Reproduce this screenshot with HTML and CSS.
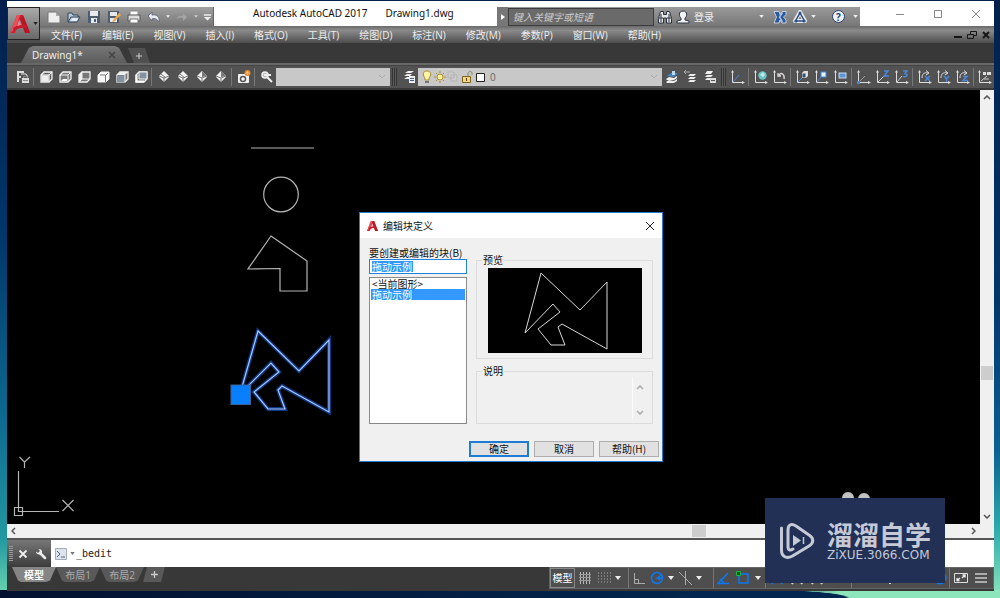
FILE: index.html
```html
<!DOCTYPE html>
<html lang="zh-CN">
<head>
<meta charset="utf-8">
<title>Autodesk AutoCAD 2017 - Drawing1.dwg</title>
<link rel="stylesheet" href="styles.css">
</head>
<body>
<svg class="defs" aria-hidden="true">
  <symbol id="caret" viewBox="0 0 6 4"><path d="M0 0h6L3 4z" fill="currentColor"/></symbol>
  <symbol id="logo-a" viewBox="0 0 22 22">
    <path d="M1 20 8 2h6l7 18h-5l-5-14-5 14z" fill="#d3202f"/>
    <path d="M8 2h3L7 15l-6 5z" fill="#e9515a"/>
    <path d="M11 6l5 14h5L14 2z" fill="#b81525"/>
    <path d="M4 15c4-3 8-4 13-3l1 3c-5-1-9 0-13 3z" fill="#c41c2b"/>
    <path d="M10 7l2 5-4 1z" fill="#ef8088"/>
  </symbol>
  <symbol id="cube" viewBox="0 0 16 16"><path d="M3 6 6 3h8v7l-3 3H3z" fill="#777" stroke="#f2f2f2" stroke-width="1.300"/></symbol>
  <symbol id="cube-top" viewBox="0 0 16 16"><use href="#cube"/><path d="M3.500 6.500h7v6h-7z" fill="#eee"/><path d="M3 6h8v7M11 6l3-3" fill="none" stroke="#fff"/><path d="M7 4.500h3M12.500 7v3" stroke="#555"/></symbol>
  <symbol id="cube-bottom" viewBox="0 0 16 16"><use href="#cube"/><path d="M3 6h8v7M11 6l3-3" fill="none" stroke="#eee"/><path d="M4 12l2-2h4v2z" fill="#fff"/></symbol>
  <symbol id="cube-left" viewBox="0 0 16 16"><use href="#cube"/><path d="M6 3v7l-3 3M6 10h8" stroke="#eee" fill="none"/><path d="M3 6l3-3v7l-3 3z" fill="#eee"/></symbol>
  <symbol id="cube-right" viewBox="0 0 16 16"><path d="M3 6 6 3h8v7l-3 3H3z" fill="#f7f7f7" stroke="#f2f2f2"/><path d="M5 6h5.500v7M11 6l2-2" fill="none" stroke="#777"/></symbol>
  <symbol id="cube-front" viewBox="0 0 16 16"><use href="#cube"/><path d="M3 6 6 3h8l-3 3z" fill="#eee"/><path d="M3 6.500h8v7H3z" fill="#8492a0"/><path d="M11 6v7" stroke="#eee"/></symbol>
  <symbol id="cube-back" viewBox="0 0 16 16"><use href="#cube"/><path d="M6 3h8v7H6z" fill="#8492a0" stroke="#eee"/><path d="M3.500 6v6.500H11" stroke="#fff" fill="none" stroke-width="2"/></symbol>
  <symbol id="iso" viewBox="0 0 16 16"><path d="M8 2l5 5v1l-5 5-5-5V7z" fill="#f2f2f2"/><path d="M3 7l5 2 5-2M8 9v4M5 5l5 4" stroke="#777" fill="none"/></symbol>
  <symbol id="iso-dark" viewBox="0 0 16 16"><path d="M8 2l5 5v1l-5 5-5-5V7z" fill="#f2f2f2"/><path d="M8 2l5 5-5 1z" fill="#777"/><path d="M3 7l5 2 5-2M8 9v4" stroke="#777" fill="none"/></symbol>
  <symbol id="views" viewBox="0 0 16 16"><path d="M3 8V3h6M3 13V8h3" stroke="#ddd" fill="none" stroke-width="2"/><path d="M6 5h5l2 3" stroke="#eee" fill="none"/><rect x="7" y="9" width="7" height="5" fill="#ddd"/><path d="M8.500 9V7.500h4V9M8 11.500h5" stroke="#888" fill="none"/></symbol>
  <symbol id="camera" viewBox="0 0 16 16"><rect x="2" y="5" width="11" height="9" rx="1" fill="#f0f0f0"/><circle cx="7" cy="10" r="2.500" fill="#fff" stroke="#555" stroke-width="1.500"/><circle cx="11.500" cy="4" r="3" fill="#e88a2e"/><path d="M11.500 2v4M9.500 4h4" stroke="#f8c080"/></symbol>
  <symbol id="key" viewBox="0 0 16 16"><circle cx="6" cy="6" r="3" fill="#bbb" stroke="#eee" stroke-width="1.500"/><path d="M5 6h7M8 8l5 5" stroke="#eee" stroke-width="2"/></symbol>
  <symbol id="layers" viewBox="0 0 16 16"><path d="M4 4 7 2h6l-3 2zM3 7l3-2h5L9 7zM3 10l3-2h3l-1 2z" fill="#eee"/><rect x="8" y="7" width="6" height="7" fill="#eee"/><path d="M9 9.500h4M9 11.500h4" stroke="#34628c"/></symbol>
  <symbol id="stack-blue" viewBox="0 0 16 16"><path d="M3 7l4-3h7l-4 4z" fill="#4385c2"/><path d="M2 10l3-2 5 1 3-2v2l-3 2H3zM2 13l3-2 5 1 3-2v2l-3 2H3z" fill="#eee"/><path d="M8 2h3v4H8z" fill="#b9dbf5"/></symbol>
  <symbol id="stack-prev" viewBox="0 0 16 16"><path d="M1 3h6M1 3l2-2M1 3l2 2" stroke="#aaa" fill="none"/><path d="M5 7l2-2h6l-2 2zM5 10l2-2h6l-2 2zM5 13l2-2h6l-2 2z" fill="#eee"/></symbol>
  <symbol id="stack-box" viewBox="0 0 16 16"><path d="M3 5l2-3h6L9 5zM3 8l2-2h6L9 8zM3 11l2-2h3v2z" fill="#eee"/><rect x="8" y="9" width="6" height="5" fill="#ddd"/><path d="M9 11.500h4" stroke="#555"/></symbol>
  <symbol id="ucs" viewBox="0 0 16 16"><path d="M2.500 2v11.500H14" stroke="#ddd" fill="none"/><path d="M1 3.500L2.500 1 4 3.500M12 12l3 1.500-3 1.500" fill="#ddd"/></symbol>
  <symbol id="ucs-plain" viewBox="0 0 16 16"><use href="#ucs"/><path d="M3 13l6-7" stroke="#4b87d8"/></symbol>
  <symbol id="ucs-world" viewBox="0 0 16 16"><use href="#ucs"/><circle cx="9.500" cy="6.500" r="4.200" fill="#6cc4c7"/><path d="M7 6l3-3 2 3-2 2z" fill="#b8ede0"/></symbol>
  <symbol id="ucs-prev" viewBox="0 0 16 16"><use href="#ucs"/><path d="M7 6c2-3 6-1 5 4M6 4v3h3" stroke="#ddd" fill="none" stroke-width="1.300"/></symbol>
  <symbol id="ucs-face" viewBox="0 0 16 16"><use href="#ucs"/><path d="M3 13l4-4" stroke="#4b87d8"/><path d="M7 4l2-2h4v5l-2 2H7z" fill="#ddd"/><path d="M7.500 4.500h3v4h-3z" fill="#34506f"/></symbol>
  <symbol id="ucs-object" viewBox="0 0 16 16"><use href="#ucs"/><path d="M3 13l4-5" stroke="#4b87d8"/><rect x="7" y="3" width="5" height="5" fill="#e5eefb" stroke="#4b87d8"/></symbol>
  <symbol id="ucs-view" viewBox="0 0 16 16"><use href="#ucs"/><rect x="6" y="4" width="7" height="5" fill="#5b95d8" stroke="#c7d8ea"/></symbol>
  <symbol id="ucs-origin" viewBox="0 0 16 16"><use href="#ucs"/><path d="M3 13l6-6" stroke="#999"/><rect x="1" y="12" width="3" height="3" fill="#4b87d8"/></symbol>
  <symbol id="ucs-z" viewBox="0 0 16 16"><use href="#ucs"/><path d="M3 13l6-6" stroke="#ccc"/><path d="M9 2h4L9 7h5" stroke="#4b87d8" fill="none" stroke-width="1.500"/></symbol>
  <symbol id="ucs-3" viewBox="0 0 16 16"><use href="#ucs"/><path d="M3 13l5-6" stroke="#ccc"/><path d="M9 2h4l-2 2.500c3 0 3 4-2 3" stroke="#4b87d8" fill="none" stroke-width="1.500"/></symbol>
  <symbol id="ucs-rot" viewBox="0 0 16 16"><use href="#ucs"/><path d="M5 9c0-4 2-6 6-5M9 1.500l3 2.500-3 2" stroke="#ddd" fill="none"/></symbol>
  <symbol id="ucs-rx" viewBox="0 0 16 16"><use href="#ucs-rot"/><path d="M8 7l5 5M13 7l-5 5" stroke="#4b87d8" stroke-width="1.500"/></symbol>
  <symbol id="ucs-ry" viewBox="0 0 16 16"><use href="#ucs-rot"/><path d="M8 7l2.500 3L13 7M10.500 10v3" stroke="#4b87d8" fill="none" stroke-width="1.500"/></symbol>
  <symbol id="ucs-rz" viewBox="0 0 16 16"><use href="#ucs-rot"/><path d="M8 7.500h4l-4 4h5" stroke="#4b87d8" fill="none" stroke-width="1.500"/></symbol>
  <symbol id="ucs-apply" viewBox="0 0 16 16"><use href="#ucs"/><path d="M4 12l6-5M7 10h5" stroke="#ccc"/><path d="M6 3h3v3H6zM10 3h4v3h-4z" fill="#ddd"/></symbol>
</svg>

<main class="window">
  <header class="header">
    <button class="app-button" aria-label="应用程序菜单"><svg class="app-logo"><use href="#logo-a"/></svg><svg class="caret dark"><use href="#caret"/></svg></button>
    <div class="titlebar">
      <div class="quick-access">
        <button aria-label="新建"><svg viewBox="0 0 14 14"><path d="M1 2h8l4 4v7H1z" fill="#eee" stroke="#777"/><path d="M9 2v4h4" fill="#aaa"/></svg></button>
        <button aria-label="打开"><svg viewBox="0 0 14 14"><path d="M1 12V3h4l1 2h5v2M1 12l3-5h9l-3 5z" fill="#b7c7d8" stroke="#34475b"/><path d="M5 8h6l-1 3H4z" fill="#e6edf4"/></svg></button>
        <button aria-label="保存"><svg viewBox="0 0 14 14"><path d="M1 1h12v12H1z" fill="#4d5d70"/><path d="M3 1h8v5H3zM4 8h6v5H4z" fill="#e6e9ee"/><path d="M7 9h2v3H7z" fill="#4d5d70"/></svg></button>
        <button aria-label="另存为"><svg viewBox="0 0 14 14"><path d="M1 1h11v12H1z" fill="#4d5d70"/><path d="M3 2h7v4H3zM3 8h7v4H3z" fill="#e6e9ee"/><path d="M6 10l6-7 2 2-6 6-3 1z" fill="#eaa74c"/></svg></button>
        <button aria-label="打印"><svg viewBox="0 0 14 14"><path d="M3 1h8v5H3z" fill="#fff" stroke="#888"/><path d="M1 5h12v6H1z" fill="#dcdcdc" stroke="#555"/><path d="M3 9h8v4H3z" fill="#fff" stroke="#777"/></svg></button>
        <button aria-label="放弃"><svg viewBox="0 0 14 14"><path d="M1 6l4-4v3c5-1 8 2 7 7-2-3-4-4-7-3v2z" fill="#e6ebef" stroke="#667"/></svg></button>
        <svg class="caret light"><use href="#caret"/></svg>
        <button aria-label="重做" disabled><svg viewBox="0 0 14 14"><path d="M2 9c0-3 3-4 6-3V4l4 3-4 4V8c-3-1-4 0-6 1z" fill="#a5a5a5"/></svg></button>
        <svg class="caret faint"><use href="#caret"/></svg>
        <button class="narrow" aria-label="自定义"><svg viewBox="0 0 10 14"><path d="M1 4h8v1.500H1zM1 7h8l-4 4z" fill="#eee"/></svg></button>
      </div>
      <h1 class="title"><span>Autodesk AutoCAD 2017</span><span>Drawing1.dwg</span></h1>
      <form class="info-center">
        <button type="button" class="expand" aria-label="展开"><svg viewBox="0 0 4 6"><path d="M0 0l4 3-4 3z" fill="#fff"/></svg></button>
        <input class="search" type="text" aria-label="搜索" placeholder="键入关键字或短语">
        <button type="button" class="info-icon" aria-label="查找"><svg viewBox="0 0 14 14"><path d="M2.500 1.500h3v3h3v-3h3l2 7v4.500h-5V8h-3v5H.500V8.500z" fill="#e8e8e8" stroke="#26303e"/><path d="M3 4v8M11 4v8M1 8h4M9 8h4" stroke="#26303e"/></svg></button>
        <button type="button" class="login"><svg viewBox="0 0 14 14"><path d="M7 1c5 0 4 6 2 7v2l4 1v2H1v-2l4-1V8C3 7 2 1 7 1z" fill="#f4f4f4" stroke="#2b3644"/></svg>登录</button>
        <svg class="caret light"><use href="#caret"/></svg>
        <button type="button" class="info-icon exchange" aria-label="Exchange"><svg viewBox="0 0 14 14"><path d="M1 1.500h5l1 3 2-3h4v3l-2.500 2.500L13 10v3H9L7 10l-1 3H1l2.500-6z" fill="#2b579b" stroke="#dde6f2" stroke-width=".8"/><path d="M9.500 2.500L6.500 7l3 5" stroke="#a7c4e8" fill="none" stroke-width="1.500"/></svg></button>
        <button type="button" class="info-icon" aria-label="A360"><svg viewBox="0 0 14 14"><path d="M7 2l5 9H2z" fill="none" stroke="#e6eaf0" stroke-width="4" stroke-linejoin="round"/><path d="M7 3l4.500 8h-9z" fill="none" stroke="#2d4e82" stroke-width="1.500"/><circle cx="7" cy="3" r="1.500" fill="#2d4e82"/><circle cx="3" cy="11" r="1.500" fill="#2d4e82"/><circle cx="11" cy="11" r="1.500" fill="#2d4e82"/></svg></button>
        <svg class="caret light"><use href="#caret"/></svg>
        <button type="button" class="help-button" aria-label="帮助">?</button>
        <svg class="caret light"><use href="#caret"/></svg>
      </form>
      <div class="window-controls">
        <button aria-label="最小化"><svg viewBox="0 0 10 10"><path d="M1 5.500h8" stroke="#888"/></svg></button>
        <button aria-label="最大化"><svg viewBox="0 0 10 10"><path d="M1.500 1.500h7v7h-7z" fill="none" stroke="#888"/></svg></button>
        <button aria-label="关闭"><svg viewBox="0 0 10 10"><path d="M1 1l8 8M9 1L1 9" stroke="#888"/></svg></button>
      </div>
    </div>
    <nav class="menubar">
      <button>文件(F)</button><button>编辑(E)</button><button>视图(V)</button><button>插入(I)</button><button>格式(O)</button><button>工具(T)</button><button>绘图(D)</button><button>标注(N)</button><button>修改(M)</button><button>参数(P)</button><button>窗口(W)</button><button>帮助(H)</button>
      <div class="doc-controls">
        <button aria-label="最小化图形"><svg viewBox="0 0 10 10"><path d="M1 7h8" stroke="#161616" stroke-width="2"/></svg></button>
        <button aria-label="还原图形"><svg viewBox="0 0 10 10"><path d="M3.500 4V1.500h6v4H7M.500 4.500h6v4h-6z" fill="none" stroke="#161616"/></svg></button>
        <button aria-label="关闭图形"><svg viewBox="0 0 10 10"><path d="M2 2l6 6M8 2L2 8" stroke="#161616" stroke-width="2"/></svg></button>
      </div>
    </nav>
  </header>

  <div class="file-tabs">
    <button class="file-tab">Drawing1*<svg viewBox="0 0 8 8"><path d="M1 1l6 6M7 1L1 7" stroke="#444" stroke-width="1.500"/></svg></button>
    <button class="add-tab" aria-label="新图形"><svg viewBox="0 0 8 8"><path d="M4 1v6M1 4h6" stroke="#ccc"/></svg></button>
  </div>

  <div class="toolbar">
    <button aria-label="命名视图"><svg><use href="#views"/></svg></button>
    <i class="sep"></i>
    <button aria-label="俯视"><svg><use href="#cube-top"/></svg></button>
    <button aria-label="仰视"><svg><use href="#cube-bottom"/></svg></button>
    <button aria-label="左视"><svg><use href="#cube-left"/></svg></button>
    <button aria-label="右视"><svg><use href="#cube-right"/></svg></button>
    <button aria-label="前视"><svg><use href="#cube-front"/></svg></button>
    <button aria-label="后视"><svg><use href="#cube-back"/></svg></button>
    <i class="sep"></i>
    <button aria-label="西南等轴测"><svg><use href="#iso"/></svg></button>
    <button aria-label="东南等轴测"><svg><use href="#iso"/></svg></button>
    <button aria-label="东北等轴测"><svg><use href="#iso-dark"/></svg></button>
    <button aria-label="西北等轴测"><svg><use href="#iso-dark"/></svg></button>
    <i class="sep"></i>
    <button aria-label="创建相机"><svg><use href="#camera"/></svg></button>
    <i class="sep"></i>
    <button aria-label="上一个视图"><svg><use href="#key"/></svg></button>
    <div class="combo view-combo"><select aria-label="视口" disabled><option></option></select><svg class="chevron" viewBox="0 0 8 5"><path d="M1 1l3 3 3-3" fill="none" stroke="#a9a9a9"/></svg></div>
    <i class="grip"></i>
    <button aria-label="图层特性"><svg><use href="#layers"/></svg></button>
    <div class="combo layer-combo">
      <svg class="layer-icons" viewBox="0 0 66 14">
        <path d="M5 1c-5 0-4 5-2 7v2h4V8c2-2 3-7-2-7z" fill="#fff6a6" stroke="#a98f31"/><path d="M3 11h4v2H3z" fill="#777"/>
        <circle cx="18" cy="7" r="3" fill="#fff09a" stroke="#a98f31"/><path d="M18 1v2M18 11v2M12 7h2M22 7h2M14 3l1 1M21 10l1 1M14 11l1-1M21 4l1-1" stroke="#b08f2d"/>
        <path d="M26 2h6v6h-6zM29 5h6v6h-6z" fill="#ccc" stroke="#b4b4b4"/>
        <path d="M40.500 6.500h8v6h-8z" fill="#f6d580" stroke="#7c6423"/><path d="M46 6V3c1-2 4-2 4 0v2" stroke="#8a8a6a" fill="none"/><path d="M44.500 8v3" stroke="#513f19"/>
        <path d="M54.500 3.500h8v8h-8z" fill="#fff" stroke="#222"/>
      </svg>
      <select aria-label="图层" disabled><option>0</option></select><svg class="chevron" viewBox="0 0 8 5"><path d="M1 1l3 3 3-3" fill="none" stroke="#a9a9a9"/></svg>
    </div>
    <button aria-label="置为当前"><svg><use href="#stack-blue"/></svg></button>
    <button aria-label="上一个图层"><svg><use href="#stack-prev"/></svg></button>
    <button aria-label="图层状态"><svg><use href="#stack-box"/></svg></button>
    <i class="grip"></i>
    <button aria-label="UCS"><svg><use href="#ucs-plain"/></svg></button>
    <i class="sep"></i>
    <button aria-label="世界"><svg><use href="#ucs-world"/></svg></button>
    <button aria-label="上一个 UCS"><svg><use href="#ucs-prev"/></svg></button>
    <i class="sep"></i>
    <button aria-label="面"><svg><use href="#ucs-face"/></svg></button>
    <button aria-label="对象"><svg><use href="#ucs-object"/></svg></button>
    <button aria-label="视图"><svg><use href="#ucs-view"/></svg></button>
    <i class="sep"></i>
    <button aria-label="原点"><svg><use href="#ucs-origin"/></svg></button>
    <button aria-label="Z 轴矢量"><svg><use href="#ucs-z"/></svg></button>
    <button aria-label="三点"><svg><use href="#ucs-3"/></svg></button>
    <i class="sep"></i>
    <button aria-label="X"><svg><use href="#ucs-rx"/></svg></button>
    <button aria-label="Y"><svg><use href="#ucs-ry"/></svg></button>
    <button aria-label="Z"><svg><use href="#ucs-rz"/></svg></button>
    <i class="sep"></i>
    <button aria-label="应用"><svg><use href="#ucs-apply"/></svg></button>
  </div>

  <section class="workspace">
    <svg class="drawing" viewBox="7 90 973 434" preserveAspectRatio="xMinYMin meet">
      <g fill="none" stroke="#b4b4b4" stroke-width="1.200">
        <path d="M251 148h63"/>
        <circle cx="281" cy="194.500" r="17.300"/>
        <path d="M271 236l36 25v30h-27v-22.500l-32 .5z"/>
        <path d="M18.500 471v40.500H59M14.500 507.500h8v8h-8z"/>
        <path d="M19.500 457l5 5v6M30 457l-5.500 5M62.500 500l11 11M73.500 500l-11 11"/>
      </g>
      <path class="glow" d="M240 394l18-63 41 40 30-31v72l-47-26-4 4 7 19h-17l-14-17 25-20-8-9z"/>
      <path class="selected" d="M240 394l18-63 41 40 30-31v72l-47-26-4 4 7 19h-17l-14-17 25-20-8-9z"/>
      <rect x="231" y="385" width="19.500" height="19.500" fill="#087fff" stroke="#3b6296"/>
      <circle cx="848" cy="498" r="6" fill="#c3c3c3"/><circle cx="864" cy="499" r="6" fill="#c3c3c3"/>
    </svg>
    <div class="v-scroll">
      <svg viewBox="0 0 8 5"><path d="M1 4l3-3 3 3" fill="none" stroke="#555" stroke-width="1.500"/></svg>
      <i></i>
      <svg viewBox="0 0 8 5"><path d="M1 1l3 3 3-3" fill="none" stroke="#555" stroke-width="1.500"/></svg>
    </div>
    <div class="h-scroll">
      <svg viewBox="0 0 5 8"><path d="M4 1L1 4l3 3" fill="none" stroke="#555" stroke-width="1.500"/></svg>
      <i></i>
      <svg viewBox="0 0 5 8"><path d="M1 1l3 3-3 3" fill="none" stroke="#555" stroke-width="1.500"/></svg>
    </div>

    <form class="dialog" role="dialog" aria-labelledby="dialog-title">
      <div class="dialog-title">
        <svg class="dialog-logo"><use href="#logo-a"/></svg>
        <h2 id="dialog-title">编辑块定义</h2>
        <button type="button" class="dialog-close" aria-label="关闭"><svg viewBox="0 0 10 10"><path d="M1 1l8 8M9 1L1 9" stroke="#222"/></svg></button>
      </div>
      <div class="dialog-body">
        <div class="block-column">
          <label for="block">要创建或编辑的块(B)</label>
          <div class="block-field"><input id="block" type="text" value="拖动示例"></div>
          <ul class="block-list" role="listbox" aria-label="块列表">
            <li role="option">&lt;当前图形&gt;</li>
            <li role="option" class="active" aria-selected="true"><span>拖动示例</span></li>
          </ul>
        </div>
        <div class="detail-column">
          <fieldset class="preview">
            <legend>预览</legend>
            <svg viewBox="0 0 154 85"><path d="M37 65L53 5l39 37 27-28v67l-45-25-4 3 7 18H63L50 61l22-17-7-8z" fill="none" stroke="#d8d8d8"/></svg>
          </fieldset>
          <fieldset class="description">
            <legend>说明</legend>
            <textarea aria-label="说明" readonly></textarea>
            <div class="mini-scroll">
              <svg viewBox="0 0 8 5"><path d="M1 4l3-3 3 3" fill="none" stroke="#aaa" stroke-width="1.500"/></svg>
              <svg viewBox="0 0 8 5"><path d="M1 1l3 3 3-3" fill="none" stroke="#aaa" stroke-width="1.500"/></svg>
            </div>
          </fieldset>
        </div>
      </div>
      <div class="dialog-actions">
        <button type="button" class="default">确定</button><button type="button">取消</button><button type="button">帮助(H)</button>
      </div>
    </form>
  </section>

  <div class="command">
    <div class="command-tools">
      <i class="dots"></i>
      <button aria-label="关闭命令行"><svg viewBox="0 0 10 10"><path d="M1.500 1.500l7 7M8.500 1.500l-7 7" stroke="#eee" stroke-width="1.800"/></svg></button>
      <button class="wrench" aria-label="自定义"><svg viewBox="0 0 12 12"><path d="M5 5l5 5" stroke="#eee" stroke-width="2.500" stroke-linecap="round"/><path d="M3.500 1l1.500 2-2 2-2-1.500C1 6 4 7.500 6 6s1.500-5-2.500-5z" fill="#eee"/></svg></button>
    </div>
    <svg class="prompt" viewBox="0 0 12 12"><path d="M.500.500h11v11H.500z" fill="#dde3ed" stroke="#a5adbb"/><path d="M2 3l3 3-3 3M6 9h4" fill="none" stroke="#56647a"/></svg>
    <svg class="caret grey"><use href="#caret"/></svg>
    <input type="text" aria-label="命令" value="_bedit">
  </div>

  <footer class="statusbar">
    <nav class="layout-tabs">
      <button class="current">模型</button><button>布局1</button><button>布局2</button><button class="plus" aria-label="新建布局"><svg viewBox="0 0 8 8"><path d="M4 0v8M0 4h8" stroke="#ccc" stroke-width="1.500"/></svg></button>
    </nav>
    <div class="status-tools">
      <button class="model">模型</button>
      <div class="status-group drafting">
        <button aria-label="栅格"><svg viewBox="0 0 16 16"><path d="M3.500 2v12M6.500 2v12M9.500 2v12M12.500 2v12" stroke="#b4b4b4"/><path d="M2 4.500h12M2 7.500h12M2 10.500h12" stroke="#999"/></svg></button>
        <button aria-label="捕捉"><svg viewBox="0 0 16 16"><path d="M2 3h13M2 6h13M2 9h13M2 12h13" stroke="#aaa" stroke-dasharray="1 2"/></svg></button>
        <svg class="caret white"><use href="#caret"/></svg>
      </div>
      <div class="status-group tracking">
        <button aria-label="正交"><svg viewBox="0 0 16 16"><path d="M4.500 3v10.500H15M4.500 9.500h4v4" fill="none" stroke="#aaa"/></svg></button>
        <button aria-label="极轴"><svg viewBox="0 0 16 16"><circle cx="8" cy="8" r="5.500" fill="none" stroke="#0d78f0" stroke-width="1.500"/><path d="M14 8H8l4-3M8 8l3 2" fill="none" stroke="#0d78f0" stroke-width="1.300"/></svg></button>
        <svg class="caret white"><use href="#caret"/></svg>
        <button aria-label="等轴测"><svg viewBox="0 0 16 16"><path d="M8.500 1v14M2 2l13 13" stroke="#aaa"/></svg></button>
        <svg class="caret white"><use href="#caret"/></svg>
      </div>
      <div class="status-group snapping">
        <button aria-label="对象捕捉追踪"><svg viewBox="0 0 16 16"><path d="M13 3L3 13.500h11M5 9l4 4" fill="none" stroke="#0d78f0" stroke-width="1.500"/></svg></button>
        <button aria-label="对象捕捉"><svg viewBox="0 0 16 16"><path d="M4 4h9v9H4z" fill="none" stroke="#0d78f0" stroke-width="1.500"/><path d="M1.500 1.500h4v4h-4z" fill="#0a5a1e" stroke="#17b546"/></svg></button>
        <svg class="caret white"><use href="#caret"/></svg>
      </div>
      <div class="status-group annotation">
        <button aria-label="注释可见性"><svg viewBox="0 0 16 16"><path d="M3 14l5-11 5 11M4 11h9" fill="none" stroke="#0d78f0" stroke-width="2"/></svg></button>
        <button aria-label="自动缩放"><svg viewBox="0 0 16 16"><path d="M3 14l5-11 5 11M4 11h9" fill="none" stroke="#ddd" stroke-width="2"/></svg></button>
        <button aria-label="注释比例"><svg viewBox="0 0 16 16"><path d="M3 14l5-11 5 11M4 11h9" fill="none" stroke="#ddd" stroke-width="2"/></svg></button>
      </div>
      <div class="status-group misc">
        <button aria-label="切换工作空间"><svg viewBox="0 0 16 16"><circle cx="8" cy="8" r="4" fill="none" stroke="#ddd" stroke-width="2"/></svg></button>
        <button aria-label="注释监视器"><svg viewBox="0 0 16 16"><path d="M8 2v12M2 8h12" stroke="#ddd" stroke-width="2"/></svg></button>
        <button aria-label="隔离对象"><svg viewBox="0 0 16 16"><path d="M4 13V8h7v5" fill="none" stroke="#ddd" stroke-width="2"/></svg></button>
        <button aria-label="硬件加速"><svg viewBox="0 0 16 16"><circle cx="8" cy="8" r="6.500" fill="#0d78f0"/></svg></button>
      </div>
      <div class="status-group end">
        <button aria-label="全屏显示"><svg viewBox="0 0 16 16"><path d="M1.500 3.500h13v9h-13z" fill="none" stroke="#ddd"/><path d="M4 10l3-2M9 8l3-3M9.500 5H12v2.500M4 8v2.500h2.500" fill="none" stroke="#eee" stroke-width="1.300"/></svg></button>
        <button aria-label="自定义"><svg viewBox="0 0 16 16"><path d="M2 4h12M2 8h12M2 12h12" stroke="#ccc" stroke-width="1.500"/></svg></button>
      </div>
    </div>
  </footer>
</main>

<aside class="watermark">
  <svg viewBox="0 0 36 38"><path d="M2.500 6v22c0 7 5 9 11 6L30 24c5-3 5-8 0-11L17 4c-5-3-8-1-8 4v17c0 3 2 4 5 2" fill="none" stroke="#c5cad6" stroke-width="3" stroke-linecap="round" stroke-linejoin="round"/><path d="M14 13l8 5.500-8 5.500z" fill="#c5cad6"/><path d="M24.500 15v7" stroke="#c5cad6" stroke-width="1.500"/></svg>
  <div><strong>溜溜自学</strong><span>ZiXUE.3066.COM</span></div>
</aside>
</body>
</html>
```
FILE: styles.css
```css
* { box-sizing: border-box; }
html, body { height: 100%; }
body {
  display: flex;
  margin: 0;
  padding: 1px 6px 7px 7px;
  overflow: hidden;
  position: relative;
  font: 10px/14px "Open Sans", "Noto Sans CJK SC", sans-serif;
  color: #ddd;
  background:
    radial-gradient(ellipse 90px 8px at 760px 100%, #02264f 95%, transparent) bottom left / 100% 8px no-repeat,
    linear-gradient(90deg, #03112f, #02274f 76%, #8de6bb 84%) bottom / 100% 8px no-repeat,
    linear-gradient(#021f4c, #01376b 40%, #0d6a90 70%, #2298a2 90%, #6fd8ae) left / 50% 100% no-repeat,
    linear-gradient(#021f4c, #01376b 50%, #0a5f91 75%, #2aa9ac 88%, #8de6bb) right / 50% 100% no-repeat;
}
button, input, select, textarea { font: inherit; color: inherit; margin: 0; padding: 0; border: 0; border-radius: 0; background: none; }
button { display: flex; align-items: center; justify-content: center; white-space: nowrap; }
h1, h2, ul, fieldset { margin: 0; padding: 0; font: inherit; }
svg { display: block; flex: none; }
.defs { position: absolute; width: 0; height: 0; }
.caret { width: 5px; height: 3px; }
.caret.dark { color: #222; }
.caret.light, .caret.white { color: #eee; }
.caret.faint { color: #ccc; }
.caret.grey { color: #777; }

.window { flex: 1; min-width: 0; display: flex; flex-direction: column; background: #383838; }

.header { display: grid; grid-template-columns: 33px 1fr; grid-template-rows: 25px 17px; background: linear-gradient(#fff 25px, #4d4d4d 25px); }
.app-button { grid-row: 1 / 3; margin-top: 6px; gap: 2px; height: 33px; border: 1px solid #222; background: linear-gradient(#aaa, #696969); }
.app-logo { width: 22px; height: 22px; }
.titlebar { display: flex; padding-top: 6px; min-width: 0; }
.quick-access { display: flex; align-items: center; width: 174px; padding-left: 7px; gap: 6px; background: linear-gradient(#a0a0a0, #777); border-right: 1px solid #666; }
.quick-access button, .quick-access button svg { width: 14px; height: 14px; }
.quick-access .caret { width: 4px; margin: 0 -1px; }
.quick-access .narrow, .quick-access .narrow svg { width: 9px; }
.title { flex: 1; display: flex; gap: 18px; padding-left: 39px; margin-top: -2px; font: 10px/16px "Noto Sans", sans-serif; color: #111; white-space: nowrap; }
.info-center { display: flex; align-items: center; width: 363px; padding-right: 2px; gap: 4px; background: linear-gradient(#9a9a9a, #777); }
.expand { width: 11px; height: 19px; margin-right: -4px; background: #777; }
.expand svg { width: 4px; height: 6px; }
.search { width: 146px; height: 18px; padding: 0 4px; background: #6a6a6a; border: 1px solid #3c3c3c; font-style: italic; color: #eee; }
.search::placeholder { color: #ccc; opacity: 1; }
.info-icon, .info-icon svg, .login svg { width: 14px; height: 14px; }
.login { gap: 4px; margin-right: auto; color: #eee; }
.exchange { margin: 0 2px 0 5px; }
.help-button { width: 13px; height: 13px; margin: 0 4px 0 12px; border-radius: 50%; border: 1px solid #25406e; background: #eef2f8; color: #1c3f80; font-weight: 700; }
.window-controls { display: flex; justify-content: space-between; align-items: center; width: 134px; padding: 0 13px 0 35px; margin-top: -6px; }
.window-controls svg, .doc-controls svg { width: 10px; height: 10px; }
.menubar { grid-column: 2; display: flex; align-items: center; gap: 20px; padding: 0 3px 0 11px; background: linear-gradient(#6a6a6a, #8b8b8b 25%, #4d4d4d); }
.menubar > button { color: #eee; }
.doc-controls { display: flex; gap: 4px; margin-left: auto; }

.file-tabs { display: flex; align-items: flex-end; height: 20px; padding-left: 14px; background: #383838; }
.file-tab { height: 17px; width: 106px; justify-content: space-between; padding: 0 11px 0 11px; font-family: "Noto Sans", sans-serif; color: #eee; background: linear-gradient(#777, #5c5c5c); clip-path: polygon(0 100%, 8px 10%, 12px 0, 94px 0, 98px 10%, 100% 100%); }
.file-tab svg { width: 8px; height: 8px; }
.add-tab { width: 22px; height: 15px; margin-left: 1px; background: #505050; clip-path: polygon(0 0, 17px 0, 100% 100%, 6px 100%); }
.add-tab svg { width: 8px; height: 8px; }

.toolbar { display: flex; align-items: center; height: 27px; padding-left: 6px; overflow: hidden; background: linear-gradient(#686868 2px, #444 2px 3px, #525252 3px 25px, #383838 25px); }
.toolbar > button { flex: 0 0 19px; height: 20px; }
.toolbar > button:last-child { flex-basis: 18px; }
.toolbar > button svg { width: 16px; height: 16px; }
.sep { flex: none; width: 1px; height: 18px; margin: 0 2px 0 1px; background: #777; }
.grip { flex: none; width: 5px; height: 18px; margin: 0 2px; background: repeating-linear-gradient(90deg, #333 0 1px, #5b5b5b 1px 2px); }
.combo { display: flex; align-items: center; height: 18px; padding: 0 4px; background: #c8c8c8; color: #666; }
.combo select { flex: 1; min-width: 0; appearance: none; opacity: 1; font-size: 10px; }
.chevron { width: 8px; height: 5px; }
.view-combo { flex: none; width: 114px; }
.layer-combo { flex: 1; min-width: 0; gap: 2px; }
.layer-icons { width: 66px; height: 14px; }

.workspace { flex: 1; min-height: 0; position: relative; display: grid; grid-template-columns: 1fr 14px; grid-template-rows: 1fr 14px; background: #000; }
.drawing { width: 100%; height: 100%; min-height: 0; }
.selected { fill: none; stroke: #a9c6ff; stroke-width: 1.2; }
.glow { fill: none; stroke: #164db6; stroke-width: 4; opacity: .7; }
.v-scroll { display: flex; flex-direction: column; align-items: center; padding: 5px 0; background: #f0f0f0; }
.v-scroll svg { width: 8px; height: 5px; }
.v-scroll i { width: 12px; height: 14px; margin: auto 0 134px; background: #cdcdcd; }
.h-scroll { grid-column: 1 / 3; display: flex; align-items: center; padding: 0 18px 0 4px; background: #f0f0f0; }
.h-scroll svg { width: 5px; height: 8px; }
.h-scroll i { width: 14px; height: 12px; margin: 0 265px 0 auto; background: #cdcdcd; }

.dialog { position: absolute; left: 352px; top: 122px; width: 304px; border: 1px solid #1d7bd0; background: #f0f0f0; color: #111; font-family: "Noto Sans CJK SC", sans-serif; }
.dialog-title { display: flex; align-items: center; gap: 4px; height: 25px; padding: 0 6px; background: #fff; }
.dialog-logo { width: 13px; height: 12px; }
.dialog-close { width: 12px; height: 12px; margin-left: auto; }
.dialog-close svg { width: 10px; height: 10px; }
.dialog-body { display: grid; grid-template-columns: 98px 1fr; gap: 9px; padding: 8px 9px 0; }
.block-column { display: flex; flex-direction: column; min-width: 0; }
.block-column label { height: 13px; line-height: 13px; white-space: nowrap; }
.block-field { height: 15px; padding: 1px 2px; border: 1px solid #2383dc; background: #fff; }
.block-field input { display: block; width: 41px; height: 11px; line-height: 11px; background: #3399ff; color: #fff; }
.block-list { flex: 1; margin-top: 3px; padding: 0 1px; border: 1px solid #888; background: #fff; list-style: none; line-height: 11px; }
.block-list li { padding-left: 1px; }
.block-list .active { background: #3399ff; color: #fff; }
.detail-column { display: grid; grid-template-rows: 105px 59px; gap: 6px; padding-top: 8px; }
fieldset { min-width: 0; border: 1px solid #dcdcdc; }
legend { padding: 0 1px; margin-left: 5px; line-height: 12px; }
.preview svg { width: 154px; height: 85px; margin: 2px 0 0 11px; background: #000; }
.description textarea { float: left; width: 155px; height: 42px; resize: none; }
.mini-scroll { display: flex; flex-direction: column; justify-content: space-between; align-items: center; width: 14px; height: 42px; padding: 8px 0 4px; border-left: 1px solid #fafafa; }
.mini-scroll svg { width: 8px; height: 5px; }
.dialog-actions { display: flex; justify-content: flex-end; gap: 5px; padding: 17px 3px 4px; }
.dialog-actions button { width: 60px; height: 16px; border: 1px solid #adadad; background: #e1e1e1; line-height: 12px; }
.dialog-actions .default { border: 2px solid #1c7cd6; }

.command { display: flex; align-items: center; height: 29px; border-top: 2px solid #555; background: #fff; color: #222; }
.command-tools { display: flex; align-items: center; align-self: stretch; width: 44px; padding-left: 2px; gap: 5px; background: linear-gradient(#777, #3b3b3b); }
.dots { width: 4px; height: 15px; background: repeating-linear-gradient(#999 0 1px, transparent 1px 2px); }
.command-tools button, .command-tools svg { width: 10px; height: 10px; }
.command-tools .wrench, .wrench svg { width: 12px; height: 12px; }
.command-tools .wrench { margin-left: 2px; }
.prompt { width: 12px; height: 12px; margin: 0 3px 0 4px; }
.command input { flex: 1; padding-left: 1px; font: 10px/14px "DejaVu Sans Mono", monospace; }

.statusbar { display: flex; justify-content: space-between; height: 24px; background: #383838; }
.layout-tabs { display: flex; padding: 0 0 0 5px; height: 15px; }
.layout-tabs button { width: 44px; height: 15px; background: #595959; color: #aaa; clip-path: polygon(0 0, 100% 0, 38px 90%, 34px 100%, 9px 100%, 6px 90%); }
.layout-tabs .current { background: #858585; color: #fff; font-weight: 700; }
.layout-tabs .plus { width: 22px; margin-left: -1px; clip-path: polygon(4px 0, 100% 0, 18px 100%, 0 100%); }
.layout-tabs .plus svg { width: 7px; height: 7px; }
.status-tools { display: flex; height: 22px; align-self: flex-start; padding-right: 1px; background: #4e4e4e; border: 1px solid #666; }
.status-tools button svg { width: 16px; height: 16px; }
.model { width: 25px; color: #fff; border: 1px solid #888; }
.status-group { display: flex; align-items: center; border-right: 1px solid #777; }
.status-group .caret { width: 6px; height: 4px; }
.drafting { gap: 3px; padding: 0 4px 0 2px; width: 54px; }
.tracking { gap: 3px; width: 85px; padding-left: 1px; }
.snapping { gap: 4px; width: 52px; padding-left: 1px; }
.annotation { gap: 4px; width: 86px; padding-left: 3px; }
.misc { gap: 9px; width: 98px; padding-left: 5px; }
.end { gap: 4px; border: 0; padding: 0 3px; }

.watermark { position: absolute; right: 55px; bottom: 15px; display: flex; align-items: center; gap: 12px; width: 180px; height: 85px; padding-left: 14px; background: #223056; color: #c5cad6; }
.watermark svg { width: 36px; height: 38px; }
.watermark div { display: flex; flex-direction: column; }
.watermark strong { font: 700 26px/28px "Noto Sans CJK SC", sans-serif; }
.watermark span { font: 12px/14px "DejaVu Sans", sans-serif; white-space: nowrap; }
```
